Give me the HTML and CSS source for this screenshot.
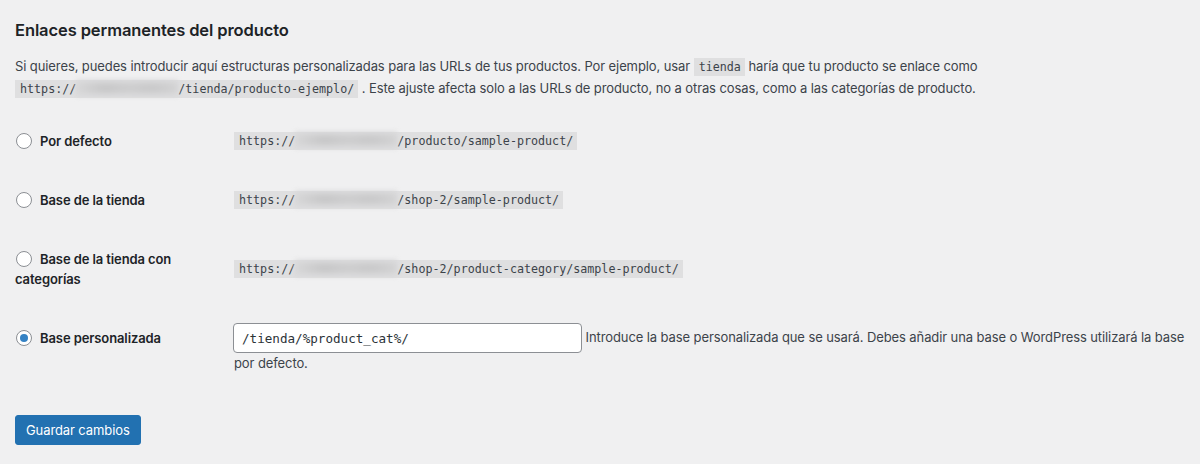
FILE: index.html
```html
<!DOCTYPE html>
<html lang="es">
<head>
    <meta charset="UTF-8">
    <title>Enlaces permanentes</title>
    <link rel="stylesheet" href="styles.css">
</head>
<body>
    <div class="wrap">
        <h2 class="title">Enlaces permanentes del producto</h2>
        <p class="intro">
            Si quieres, puedes introducir aquí estructuras personalizadas para las URLs de tus productos. Por ejemplo, usar
            <code>tienda</code> haría que tu producto se enlace como
            <code>https://<span class="masked"></span>/tienda/producto-ejemplo/</code> . Este ajuste afecta solo a las URLs de producto, no a otras cosas, como a las categorías de producto.
        </p>

        <table class="form-table">
            <tr>
                <th><label><span class="radio"></span>Por defecto</label></th>
                <td><code>https://<span class="masked"></span>/producto/sample-product/</code></td>
            </tr>
            <tr>
                <th><label><span class="radio"></span>Base de la tienda</label></th>
                <td><code>https://<span class="masked"></span>/shop-2/sample-product/</code></td>
            </tr>
            <tr>
                <th><label><span class="radio"></span>Base de la tienda con categorías</label></th>
                <td><code>https://<span class="masked"></span>/shop-2/product-category/sample-product/</code></td>
            </tr>
            <tr>
                <th class="top"><label><span class="radio checked"></span>Base personalizada</label></th>
                <td class="top">
                    <input class="regular-text code" type="text" value="/tienda/%product_cat%/">
                    <span class="description">Introduce la base personalizada que se usará. Debes añadir una base o WordPress utilizará la base por defecto.</span>
                </td>
            </tr>
        </table>

        <p class="submit">
            <button class="button-primary" type="button">Guardar cambios</button>
        </p>
    </div>
</body>
</html>
```

FILE: styles.css
```css
html, body {
    margin: 0;
    padding: 0;
    background: #f0f0f1;
}
body {
    color: #3c434a;
    font: 13px/1.4 Inter, "Noto Sans", "Liberation Sans", sans-serif;
    letter-spacing: -0.1px;
}
.wrap {
    padding: 19px 15px 0 15px;
}
h2.title {
    margin: 0;
    font-size: 16.5px;
    line-height: 22px;
    font-weight: 600;
    color: #1d2327;
}
p.intro {
    margin: 14px 0 0 0;
    line-height: 22px;
}
code {
    display: inline-block;
    padding: 0 4px 0 5px;
    line-height: 18px;
    background: rgba(0, 0, 0, 0.07);
    color: #3c434a;
    font-family: "DejaVu Sans Mono", monospace;
    font-size: 11.7px;
    letter-spacing: 0;
    white-space: nowrap;
}
.masked {
    display: inline-block;
    width: 102px;
    height: 16px;
    vertical-align: -3px;
    background:
        radial-gradient(ellipse 32px 8px at 30% 50%, #c4c4c5, transparent),
        radial-gradient(ellipse 40px 8px at 72% 50%, #c6c6c7, transparent),
        #d8d8d9;
    filter: blur(2.5px);
}
.form-table {
    border-collapse: collapse;
    table-layout: fixed;
    width: 1182px;
    margin-top: 12px;
}
.form-table th {
    width: 209px;
    padding: 19.5px 10px 19.5px 0;
    text-align: left;
    vertical-align: middle;
    font-weight: 600;
    color: #1d2327;
    line-height: 20px;
}
.form-table td {
    padding: 15px 0 15px 0;
    vertical-align: middle;
}
.form-table th.top,
.form-table td.top {
    vertical-align: top;
}
.form-table td.top {
    line-height: 20px;
}
.radio {
    display: inline-block;
    width: 14px;
    height: 14px;
    margin: 0 8px 0 1px;
    vertical-align: -3px;
    border: 1px solid #8c8f94;
    border-radius: 50%;
    background: #fff;
    box-sizing: content-box;
    position: relative;
}
.radio.checked::after {
    content: "";
    position: absolute;
    left: 3px;
    top: 3px;
    width: 8px;
    height: 8px;
    border-radius: 50%;
    background: #3582c4;
}
input.regular-text {
    box-sizing: border-box;
    width: 349px;
    height: 30px;
    margin: 0 0 0 -1px;
    padding: 0 8px;
    border: 1px solid #8c8f94;
    border-radius: 4px;
    background: #fff;
    color: #2c3338;
    font-family: "DejaVu Sans Mono", monospace;
    font-size: 12.6px;
    letter-spacing: 0;
    vertical-align: middle;
}
.description {
    color: #3c434a;
}
p.submit {
    margin: 27px 0 0 0;
}
.button-primary {
    height: 30px;
    padding: 0 10px;
    border: 1px solid #2271b1;
    border-radius: 3px;
    background: #2271b1;
    color: #fff;
    font: 13px Inter, "Noto Sans", "Liberation Sans", sans-serif;
    letter-spacing: -0.1px;
    cursor: pointer;
}
```
